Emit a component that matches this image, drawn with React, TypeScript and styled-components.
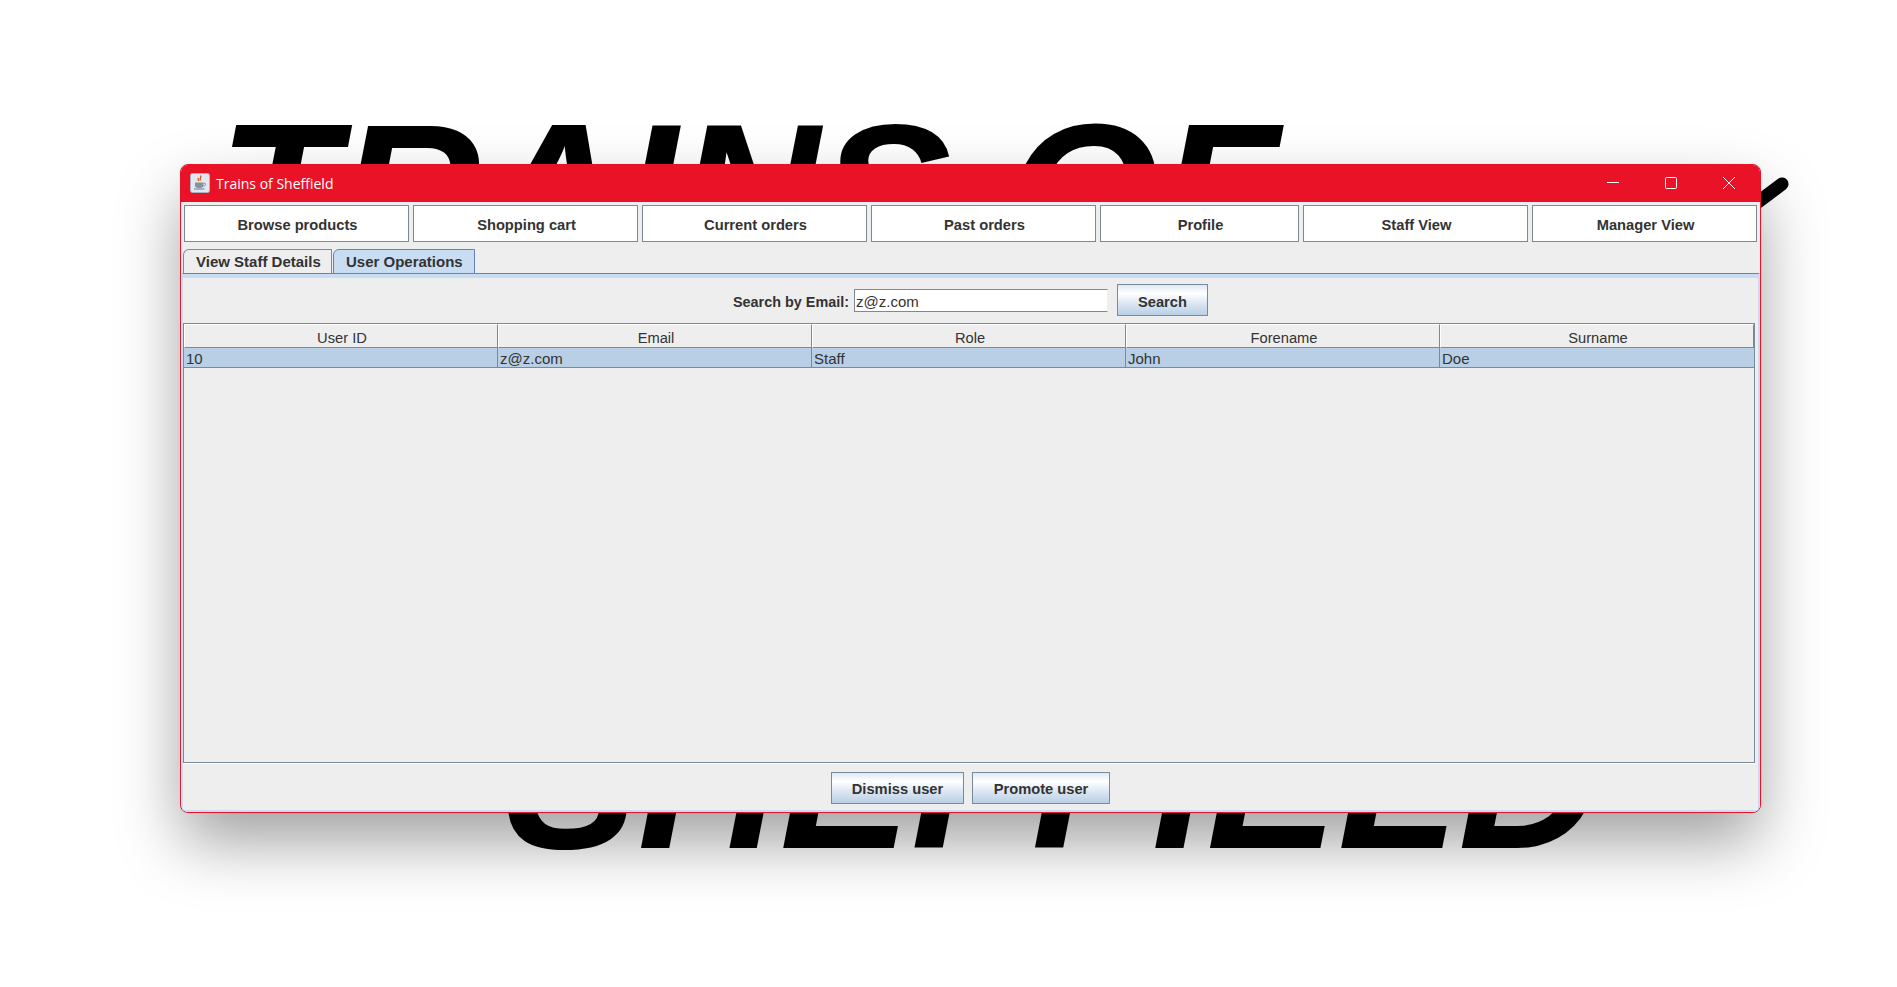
import React from "react";
import styled, { createGlobalStyle } from "styled-components";

const Global = createGlobalStyle`
  html, body { margin: 0; padding: 0; background: #fff; overflow: hidden; }
  * { box-sizing: border-box; }
`;

const Desktop = styled.div`
  position: relative;
  width: 1897px;
  height: 987px;
  background: #fff;
  overflow: hidden;
  display: flex;
  flex-direction: column;
  align-items: flex-start;
`;

const Headline = styled.div<{ $left: number; $top: number }>`
  font: italic 700 197px/197px "Liberation Sans", Arial, sans-serif;
  color: #000;
  white-space: nowrap;
  margin-left: ${(p) => p.$left}px;
  margin-top: ${(p) => p.$top}px;
`;

const Flourish = styled.svg`
  position: absolute;
  left: 1740px;
  top: 170px;
  width: 60px;
  height: 50px;
`;

const Window = styled.div`
  position: absolute;
  left: 180px;
  top: 164px;
  width: 1581px;
  height: 649px;
  display: flex;
  flex-direction: column;
  background: #eeeeee;
  border: 1px solid #ea1226;
  border-radius: 8px;
  box-shadow: 0 30px 64px -2px rgba(0, 0, 0, 0.38);
  overflow: hidden;
  font: 400 14.7px "Liberation Sans", Arial, sans-serif;
  color: #333;
`;

const TitleBar = styled.div`
  height: 38px;
  flex: none;
  background: #ea1226;
  display: flex;
  align-items: center;
  padding: 0 2px 0 9px;
  color: #fff;
  margin-top: -1px;
`;

const TitleText = styled.span`
  margin-left: 6px;
  font: 400 14px "Open Sans", "Noto Sans", sans-serif;
  flex: 1;
`;

const Control = styled.div`
  width: 58px;
  height: 37px;
  display: flex;
  align-items: center;
  justify-content: center;
`;

const NavRow = styled.div`
  display: flex;
  gap: 4px;
  padding: 3px 3px 0 3px;
  flex: none;
`;

const NavButton = styled.div<{ $narrow?: boolean }>`
  height: 37px;
  flex: ${(p) => (p.$narrow ? "0 0 199px" : "1 1 0")};
  background: #fff;
  border: 1px solid #7a8a99;
  display: flex;
  align-items: center;
  justify-content: center;
  padding: 2px 0 0 2px;
  font-weight: 700;
`;

const TabStrip = styled.div`
  display: flex;
  height: 24px;
  margin-top: 7px;
  padding-left: 2px;
  flex: none;
`;

const Tab = styled.div<{ $active?: boolean; $width: number }>`
  width: ${(p) => p.$width}px;
  height: ${(p) => (p.$active ? "25px" : "24px")};
  padding-left: 12px;
  margin-left: ${(p) => (p.$active ? "1px" : "0")};
  border: 1px solid ${(p) => (p.$active ? "#6382bf" : "#7a8a99")};
  border-bottom: ${(p) => (p.$active ? "1px solid #6382bf" : "none")};
  border-top-left-radius: 6px;
  background: ${(p) => (p.$active ? "#c8ddf2" : "#eeeeee")};
  display: flex;
  align-items: center;
  font-size: 15px;
  font-weight: 700;
  position: relative;
  z-index: 1;
`;

const Pane = styled.div`
  flex: 1;
  display: flex;
  flex-direction: column;
  margin-left: 1px;
  border-top: 1px solid #6382bf;
  border-left: 1px solid #c8ddf2;
  border-right: 2px solid #c8ddf2;
  border-bottom: 2px solid #c8ddf2;
  min-height: 0;
`;

const PaneBand = styled.div`
  height: 4px;
  background: #c8ddf2;
  flex: none;
`;

const SearchRow = styled.div`
  height: 45px;
  flex: none;
  display: flex;
  align-items: center;
  justify-content: center;
  padding-bottom: 1px;
`;

const SearchLabel = styled.span`
  font-size: 14.4px;
  font-weight: 700;
  margin-right: 5px;
  padding-top: 3px;
`;

const Field = styled.div`
  width: 254px;
  height: 23px;
  background: #fff;
  border: 1px solid #7a8a99;
  border-right-color: #eee;
  padding: 3px 2px 0 1px;
  font-size: 15px;
  line-height: 18px;
  margin-right: 9px;
`;

const GradientButton = styled.div<{ $width: number }>`
  width: ${(p) => p.$width}px;
  height: 32px;
  border: 1px solid #7a8a99;
  background: linear-gradient(#dde8f3 0%, #ffffff 28%, #dde8f3 60%, #b8cfe5 100%);
  display: flex;
  align-items: center;
  justify-content: center;
  padding-top: 3px;
  font-weight: 700;
`;

const TableFrame = styled.div`
  flex: 1;
  margin: 0 3px 0 0;
  border: 1px solid #7a8a99;
  box-shadow: 0 1px 0 #fff;
  display: flex;
  flex-direction: column;
  min-height: 0;
`;

const Columns = styled.div`
  display: grid;
  grid-template-columns: repeat(5, 1fr);
  flex: none;
`;

const HeaderCell = styled.div`
  height: 24px;
  border-left: 1px solid #fff;
  border-top: 1px solid #fff;
  border-right: 1px solid #7a8a99;
  border-bottom: 1px solid #7a8a99;
  background: #eeeeee;
  display: flex;
  align-items: center;
  justify-content: center;
  padding: 3px 0 0 2px;
  &:last-child { border-right: none; }
`;

const DataCell = styled.div`
  height: 20px;
  background: #b8cfe5;
  border-right: 1px solid #7a8a99;
  border-bottom: 1px solid #7a8a99;
  padding: 1px 0 0 2px;
  font-size: 15px;
  line-height: 20px;
  &:last-child { border-right: none; }
`;

const ActionRow = styled.div`
  height: 47px;
  flex: none;
  display: flex;
  align-items: center;
  justify-content: center;
  gap: 8px;
  padding-top: 2px;
`;

const JavaIcon = () => (
  <svg width="20" height="20" viewBox="0 0 20 20">
    <rect x="0.5" y="0.5" width="19" height="19" rx="2" fill="#e4e8ee" stroke="#a9b4c2" />
    <path d="M10.5 2.5c1.5 1.8-1.5 3 0 5M8.3 5c-.8 1.2.8 1.8 0 3" fill="none" stroke="#d9541e" strokeWidth="1.3" />
    <path d="M5 9.5h8.5v3c0 1.6-1.4 2.5-3 2.5H8c-1.600 0-3-.9-3-2.500z" fill="#8a9099" />
    <path d="M13.500 10.300h1.300c1.300 0 1.300 2.600-1.300 2.900" fill="none" stroke="#8a9099" strokeWidth="1" />
    <path d="M4 16h10.500" stroke="#5b7fa6" strokeWidth="1.200" />
  </svg>
);

const MinimizeIcon = () => (
  <svg width="12" height="12" viewBox="0 0 12 12"><path d="M0 5.500h12" stroke="#fff" strokeWidth="1" /></svg>
);
const MaximizeIcon = () => (
  <svg width="12" height="12" viewBox="0 0 12 12"><rect x="0.500" y="0.500" width="11" height="11" rx="1" fill="none" stroke="#fff" strokeWidth="1" /></svg>
);
const CloseIcon = () => (
  <svg width="12" height="12" viewBox="0 0 12 12"><path d="M0 0l12 12M12 0L0 12" stroke="#fff" strokeWidth="1" /></svg>
);

const navItems = ["Browse products", "Shopping cart", "Current orders", "Past orders", "Profile", "Staff View", "Manager View"];
const headers = ["User ID", "Email", "Role", "Forename", "Surname"];
const row = ["10", "z@z.com", "Staff", "John", "Doe"];

export default function App() {
  return (
    <Desktop>
      <Global />
      <Headline $left={218} $top={95}>TRAINS OF</Headline>
      <Headline $left={506} $top={390}>SHEFFIELD</Headline>
      <Flourish viewBox="0 0 60 50">
        <path d="M10 38L42 14" stroke="#000" strokeWidth="13" strokeLinecap="round" />
      </Flourish>
      <Window>
        <TitleBar>
          <JavaIcon />
          <TitleText>Trains of Sheffield</TitleText>
          <Control><MinimizeIcon /></Control>
          <Control><MaximizeIcon /></Control>
          <Control><CloseIcon /></Control>
        </TitleBar>
        <NavRow>
          {navItems.map((n) => (
            <NavButton key={n} $narrow={n === "Profile"}>{n}</NavButton>
          ))}
        </NavRow>
        <TabStrip>
          <Tab $width={149}>View Staff Details</Tab>
          <Tab $active $width={142}>User Operations</Tab>
        </TabStrip>
        <Pane>
          <PaneBand />
          <SearchRow>
            <SearchLabel>Search by Email:</SearchLabel>
            <Field>z@z.com</Field>
            <GradientButton $width={91}>Search</GradientButton>
          </SearchRow>
          <TableFrame>
            <Columns>
              {headers.map((h) => <HeaderCell key={h}>{h}</HeaderCell>)}
              {row.map((c) => <DataCell key={c}>{c}</DataCell>)}
            </Columns>
          </TableFrame>
          <ActionRow>
            <GradientButton $width={133}>Dismiss user</GradientButton>
            <GradientButton $width={138}>Promote user</GradientButton>
          </ActionRow>
        </Pane>
      </Window>
    </Desktop>
  );
}
